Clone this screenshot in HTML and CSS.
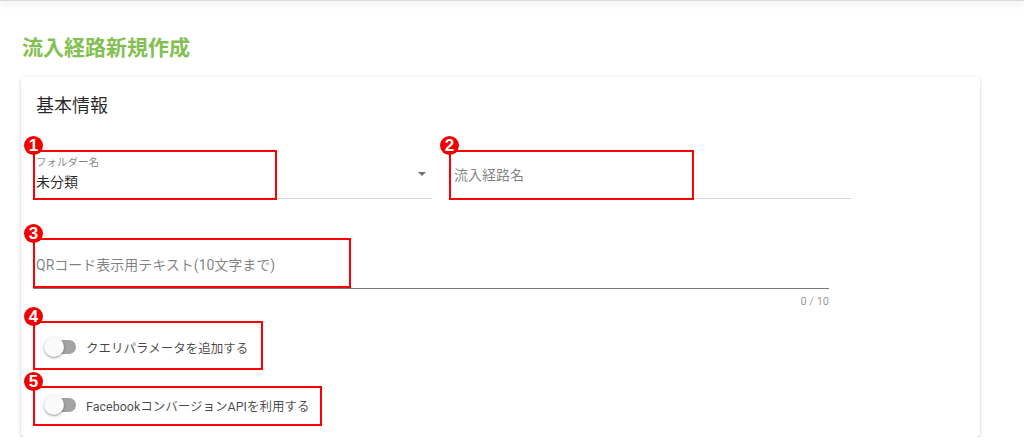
FILE: index.html
```html
<!DOCTYPE html>
<html lang="ja">
<head>
<meta charset="utf-8">
<title>流入経路新規作成</title>
<link rel="stylesheet" href="styles.css">
</head>
<body>
<div class="appbar"></div>
<main class="main">
  <h1 class="page-title">流入経路新規作成</h1>
  <section class="card">
    <div class="card-title">基本情報</div>

    <div class="row">
      <div class="field select">
        <div class="select-text">
          <div class="field-label">フォルダー名</div>
          <div class="field-value">未分類</div>
        </div>
        <span class="arrow"></span>
      </div>
      <div class="field text">
        <div class="placeholder">流入経路名</div>
      </div>
    </div>

    <div class="field qr">
      <div class="placeholder">QRコード表示用テキスト(10文字まで)</div>
    </div>
    <div class="counter">0 / 10</div>

    <div class="toggle toggle-first">
      <span class="switch"><span class="track"></span><span class="thumb"></span></span>
      <span class="toggle-label">クエリパラメータを追加する</span>
    </div>
    <div class="toggle toggle-second">
      <span class="switch"><span class="track"></span><span class="thumb"></span></span>
      <span class="toggle-label">FacebookコンバージョンAPIを利用する</span>
    </div>

    <div class="mark mark-1"><span class="badge">1</span></div>
    <div class="mark mark-2"><span class="badge">2</span></div>
    <div class="mark mark-3"><span class="badge">3</span></div>
    <div class="mark mark-4"><span class="badge">4</span></div>
    <div class="mark mark-5"><span class="badge">5</span></div>
  </section>
</main>
</body>
</html>
```

FILE: styles.css
```css
* { box-sizing: border-box; }

html, body {
  margin: 0;
  padding: 0;
  background: #ffffff;
  font-family: Roboto, "Noto Sans CJK JP", sans-serif;
  color: rgba(0, 0, 0, 0.87);
}

.appbar {
  height: 1px;
  background: #d8d8d8;
  box-shadow: 0 2px 6px rgba(0, 0, 0, 0.28);
}

.main {
  padding: 0 44px 0 21px;
}

.page-title {
  margin: 33px 0 15px 1px;
  font-size: 21px;
  line-height: 28px;
  font-weight: 700;
  color: #83c052;
  letter-spacing: 0;
}

.card {
  position: relative;
  height: 360px;
  padding: 0 12px;
  background: #fff;
  border-radius: 4px;
  box-shadow: 0 3px 1px -2px rgba(0,0,0,.2), 0 2px 2px 0 rgba(0,0,0,.14), 0 1px 5px 0 rgba(0,0,0,.12);
}

.card-title {
  height: 58px;
  line-height: 58px;
  padding-left: 3px;
  font-size: 18px;
  color: rgba(0, 0, 0, 0.85);
}

.row {
  display: grid;
  grid-template-columns: 399px 402px;
  column-gap: 17px;
  margin-top: 15px;
}

.field {
  height: 49px;
  border-bottom: 1px solid #d6d6d6;
}

.select {
  display: flex;
  align-items: center;
  padding-left: 3px;
  padding-right: 6px;
}

.select-text {
  flex: 1;
  align-self: flex-start;
  padding-top: 6px;
}

.field-label {
  font-size: 10.5px;
  line-height: 14px;
  color: rgba(0, 0, 0, 0.5);
}

.field-value {
  margin-top: 2px;
  font-size: 14px;
  line-height: 20px;
  color: rgba(0, 0, 0, 0.85);
}

.arrow {
  width: 0;
  height: 0;
  border-left: 4.5px solid transparent;
  border-right: 4.5px solid transparent;
  border-top: 4.5px solid #6f6f6f;
}

.text {
  padding: 15px 0 0 5px;
}

.placeholder {
  font-size: 14px;
  line-height: 20px;
  color: rgba(0, 0, 0, 0.5);
}

.qr {
  width: 796px;
  height: 51px;
  margin-top: 39px;
  padding: 17px 0 0 3px;
  border-bottom: 1px solid #7a7a7a;
}

.counter {
  width: 796px;
  margin-top: 5px;
  height: 16px;
  line-height: 16px;
  text-align: right;
  font-size: 11px;
  color: rgba(0, 0, 0, 0.45);
}

.toggle {
  display: flex;
  align-items: center;
  height: 40px;
  padding-left: 11px;
}

.toggle-first { margin-top: 17px; }
.toggle-second { margin-top: 18px; }

.switch {
  position: relative;
  width: 32px;
  height: 20px;
  flex: none;
}

.track {
  position: absolute;
  left: 5px;
  right: 0;
  top: 3px;
  height: 14px;
  border-radius: 7px;
  background: #a3a3a3;
}

.thumb {
  position: absolute;
  left: 0;
  top: 0;
  width: 20px;
  height: 20px;
  border-radius: 50%;
  background: #fafafa;
  box-shadow: 0 1px 3px rgba(0,0,0,.3), 0 1px 1px rgba(0,0,0,.14);
}

.toggle-label {
  margin-left: 10px;
  font-size: 12.5px;
  color: rgba(0, 0, 0, 0.72);
}

/* annotation overlays */
.mark {
  position: absolute;
  border: 2px solid #ff0000;
}

.mark-1 { left: 12px; top: 73px; width: 244px; height: 50px; }
.mark-2 { left: 428px; top: 73px; width: 245px; height: 50px; }
.mark-3 { left: 12px; top: 161px; width: 318px; height: 50px; }
.mark-4 { left: 12px; top: 244px; width: 230px; height: 49px; }
.mark-5 { left: 12px; top: 309px; width: 289px; height: 40px; }

.badge {
  position: absolute;
  left: -11px;
  top: -16px;
  width: 19px;
  height: 19px;
  border-radius: 50%;
  background: #f00000;
  color: #fff;
  font-family: "Liberation Sans", Arial, sans-serif;
  font-weight: 700;
  font-size: 17px;
  line-height: 20px;
  text-align: center;
}
```
